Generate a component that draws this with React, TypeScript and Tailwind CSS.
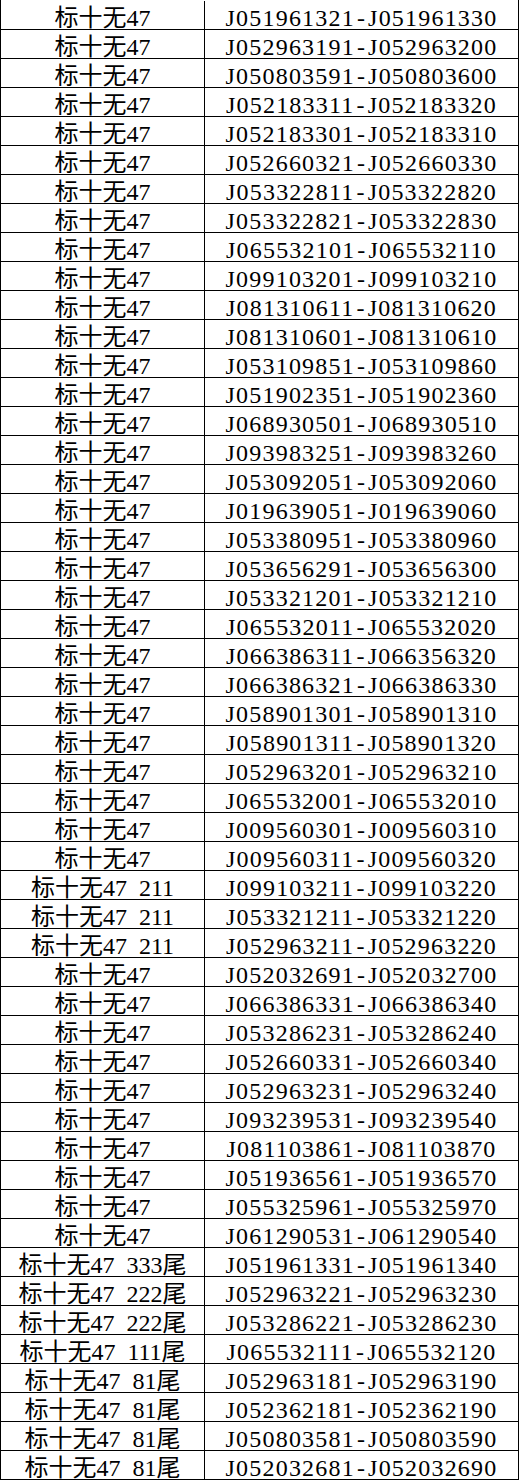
const rows: [string, string][] = [
  ["标十无47", "J051961321-J051961330"],
  ["标十无47", "J052963191-J052963200"],
  ["标十无47", "J050803591-J050803600"],
  ["标十无47", "J052183311-J052183320"],
  ["标十无47", "J052183301-J052183310"],
  ["标十无47", "J052660321-J052660330"],
  ["标十无47", "J053322811-J053322820"],
  ["标十无47", "J053322821-J053322830"],
  ["标十无47", "J065532101-J065532110"],
  ["标十无47", "J099103201-J099103210"],
  ["标十无47", "J081310611-J081310620"],
  ["标十无47", "J081310601-J081310610"],
  ["标十无47", "J053109851-J053109860"],
  ["标十无47", "J051902351-J051902360"],
  ["标十无47", "J068930501-J068930510"],
  ["标十无47", "J093983251-J093983260"],
  ["标十无47", "J053092051-J053092060"],
  ["标十无47", "J019639051-J019639060"],
  ["标十无47", "J053380951-J053380960"],
  ["标十无47", "J053656291-J053656300"],
  ["标十无47", "J053321201-J053321210"],
  ["标十无47", "J065532011-J065532020"],
  ["标十无47", "J066386311-J066356320"],
  ["标十无47", "J066386321-J066386330"],
  ["标十无47", "J058901301-J058901310"],
  ["标十无47", "J058901311-J058901320"],
  ["标十无47", "J052963201-J052963210"],
  ["标十无47", "J065532001-J065532010"],
  ["标十无47", "J009560301-J009560310"],
  ["标十无47", "J009560311-J009560320"],
  ["标十无47  211", "J099103211-J099103220"],
  ["标十无47  211", "J053321211-J053321220"],
  ["标十无47  211", "J052963211-J052963220"],
  ["标十无47", "J052032691-J052032700"],
  ["标十无47", "J066386331-J066386340"],
  ["标十无47", "J053286231-J053286240"],
  ["标十无47", "J052660331-J052660340"],
  ["标十无47", "J052963231-J052963240"],
  ["标十无47", "J093239531-J093239540"],
  ["标十无47", "J081103861-J081103870"],
  ["标十无47", "J051936561-J051936570"],
  ["标十无47", "J055325961-J055325970"],
  ["标十无47", "J061290531-J061290540"],
  ["标十无47  333尾", "J051961331-J051961340"],
  ["标十无47  222尾", "J052963221-J052963230"],
  ["标十无47  222尾", "J053286221-J053286230"],
  ["标十无47  111尾", "J065532111-J065532120"],
  ["标十无47  81尾", "J052963181-J052963190"],
  ["标十无47  81尾", "J052362181-J052362190"],
  ["标十无47  81尾", "J050803581-J050803590"],
  ["标十无47  81尾", "J052032681-J052032690"],
];

export default function App() {
  return (
    <div className="w-[519px] border-x border-black bg-white pt-px text-[24px] text-black font-['Liberation_Serif','Noto_Sans_CJK_SC',serif]">
      {rows.map(([name, range], i) => {
        const [from, to] = range.split("-");
        return (
          <div key={i} className="grid h-[29px] grid-cols-[204px_1fr] border-b border-black">
            <div className="flex items-center justify-center whitespace-pre border-r border-black pt-[5px] leading-none">
              {name}
            </div>
            <div className="flex items-center justify-center pt-[5px] leading-none tracking-[1.2px]">
              {from}
              <span className="px-[2px]">-</span>
              {to}
            </div>
          </div>
        );
      })}
    </div>
  );
}
